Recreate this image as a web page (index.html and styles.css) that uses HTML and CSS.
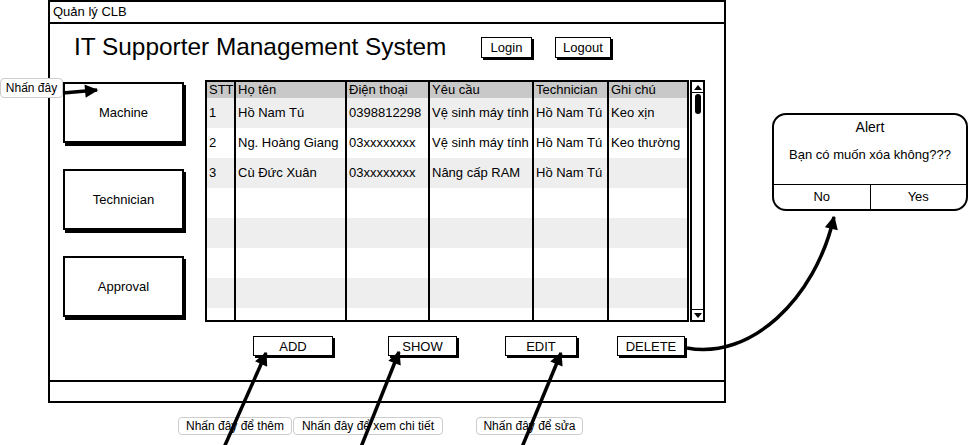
FILE: index.html
```html
<html lang="vi">
<head>
    <meta charset="UTF-8">
    <title>Quản lý CLB</title>
    <link rel="stylesheet" href="styles.css">
</head>
<body>
<div class="page">
    <div class="window">
        <div class="titlebar">Quản lý CLB</div>
        <div class="header">
            <h1>IT Supporter Management System</h1>
            <button class="btn btn-login">Login</button>
            <button class="btn btn-logout">Logout</button>
        </div>
        <div class="main">
            <div class="nav">
                <button class="nav-btn">Machine</button>
                <button class="nav-btn">Technician</button>
                <button class="nav-btn">Approval</button>
            </div>
            <div class="grid">
                <div class="row head">
                    <div class="cell">STT</div><div class="cell">Họ tên</div><div class="cell">Điện thoại</div><div class="cell">Yêu cầu</div><div class="cell">Technician</div><div class="cell">Ghi chú</div>
                </div>
                <div class="row">
                    <div class="cell">1</div><div class="cell">Hồ Nam Tú</div><div class="cell">0398812298</div><div class="cell">Vệ sinh máy tính</div><div class="cell">Hồ Nam Tú</div><div class="cell">Keo xịn</div>
                </div>
                <div class="row">
                    <div class="cell">2</div><div class="cell">Ng. Hoàng Giang</div><div class="cell">03xxxxxxxx</div><div class="cell">Vệ sinh máy tính</div><div class="cell">Hồ Nam Tú</div><div class="cell">Keo thường</div>
                </div>
                <div class="row">
                    <div class="cell">3</div><div class="cell">Cù Đức Xuân</div><div class="cell">03xxxxxxxx</div><div class="cell">Nâng cấp RAM</div><div class="cell">Hồ Nam Tú</div><div class="cell"></div>
                </div>
                <div class="row"><div class="cell"></div><div class="cell"></div><div class="cell"></div><div class="cell"></div><div class="cell"></div><div class="cell"></div></div>
                <div class="row"><div class="cell"></div><div class="cell"></div><div class="cell"></div><div class="cell"></div><div class="cell"></div><div class="cell"></div></div>
                <div class="row"><div class="cell"></div><div class="cell"></div><div class="cell"></div><div class="cell"></div><div class="cell"></div><div class="cell"></div></div>
                <div class="row"><div class="cell"></div><div class="cell"></div><div class="cell"></div><div class="cell"></div><div class="cell"></div><div class="cell"></div></div>
                <div class="row"><div class="cell"></div><div class="cell"></div><div class="cell"></div><div class="cell"></div><div class="cell"></div><div class="cell"></div></div>
            </div>
            <div class="scroll">
                <div class="scroll-up"><span class="tri-up"></span></div>
                <div class="thumb"></div>
                <div class="scroll-down"><span class="tri-down"></span></div>
            </div>
        </div>
        <div class="actions">
            <button class="btn btn-add">ADD</button>
            <button class="btn btn-show">SHOW</button>
            <button class="btn btn-edit">EDIT</button>
            <button class="btn btn-delete">DELETE</button>
        </div>
        <div class="statusbar"></div>
    </div>

    <div class="notes">
        <div class="note note-add">Nhấn đây để thêm</div>
        <div class="note note-show">Nhấn đây để xem chi tiết</div>
        <div class="note note-edit">Nhấn đây để sửa</div>
    </div>

    <div class="note note-top">Nhấn đây</div>

    <div class="alert">
        <div class="alert-title">Alert</div>
        <div class="alert-msg">Bạn có muốn xóa không???</div>
        <div class="alert-foot">
            <div class="alert-btn">No</div>
            <div class="alert-btn">Yes</div>
        </div>
    </div>

    <!-- annotation arrows -->
    <svg class="arrows" width="970" height="445" viewBox="0 0 970 445">
        <defs>
            <marker id="head" viewBox="0 0 10 10" refX="9" refY="5" markerWidth="4.2" markerHeight="3.8" orient="auto">
                <path d="M0,0 L10,5 L0,10 z" fill="#000"/>
            </marker>
        </defs>
        <g fill="none" stroke="#000" stroke-width="3.5" marker-end="url(#head)">
            <path d="M63,93 L97,90"/>
            <path d="M222,452 L266,353"/>
            <path d="M359,452 L399,352"/>
            <path d="M520,452 L561,353"/>
            <path d="M687,348 C750,360 815,300 834,217"/>
        </g>
    </svg>
</div>
</body>
</html>
```

FILE: styles.css
```css
body { margin: 0; font-family: "Liberation Sans", Arial, sans-serif; color: #000; background: #fff; }
.page { position: relative; width: 970px; height: 445px; overflow: hidden; }

.window { margin-left: 48px; width: 678px; height: 403px; border: 2px solid #000; box-sizing: border-box; display: flex; flex-direction: column; }
.titlebar { height: 20px; border-bottom: 2px solid #000; font-size: 13px; line-height: 20px; padding-left: 3px; }

.header { height: 56px; display: flex; align-items: center; padding: 0 0 10px 24px; box-sizing: border-box; }
.header h1 { margin: 0; width: 407px; flex: none; font-size: 24.4px; font-weight: normal; }

.btn { font-family: "Liberation Sans", Arial, sans-serif; font-size: 13px; color: #000; background: #fff; border: 1.5px solid #000; box-shadow: 2px 2px 0 #000; padding: 0; height: 21px; }
.btn-login { width: 51px; }
.btn-logout { width: 56px; margin-left: 23px; }

.main { height: 242px; display: flex; padding-left: 13px; }
.nav { display: flex; flex-direction: column; gap: 26px; padding-top: 2px; width: 121px; }
.nav-btn { height: 61px; width: 121px; border: 2px solid #000; box-shadow: 2px 3px 0 #000; background: #fff; font-family: "Liberation Sans", Arial, sans-serif; font-size: 13px; color: #000; padding: 0; }

.grid { margin-left: 21px; width: 484px; height: 242px; border: 2px solid #000; box-sizing: border-box; overflow: hidden; }
.row { display: grid; grid-template-columns: 29px 111px 83px 104px 75px 78px; height: 30px; flex: none; }
.row:nth-child(even) { background: #eee; }
.row.head { height: 16px; background: #c8c8c8; }
.cell { border-right: 2px solid #000; padding-left: 2px; line-height: 30px; font-size: 13px; white-space: nowrap; overflow: hidden; }
.head .cell { line-height: 16px; }
.cell:last-child { border-right: none; }

.scroll { margin-left: 1px; width: 15px; height: 242px; border: 2px solid #000; box-sizing: border-box; display: flex; flex-direction: column; }
.scroll-up { height: 10px; border-bottom: 1.5px solid #000; display: flex; justify-content: center; align-items: center; }
.scroll-down { height: 10px; border-top: 1.5px solid #000; margin-top: auto; display: flex; justify-content: center; align-items: center; }
.tri-up { width: 0; height: 0; border-left: 4px solid transparent; border-right: 4px solid transparent; border-bottom: 5px solid #000; }
.tri-down { width: 0; height: 0; border-left: 4px solid transparent; border-right: 4px solid transparent; border-top: 5px solid #000; }
.thumb { width: 6px; height: 20px; margin: 1px auto 0; background: #000; border-radius: 3px; }

.actions { height: 58px; padding: 14px 0 0 203px; display: flex; align-items: flex-start; box-sizing: border-box; }
.actions .btn { height: 20px; }
.btn-add { width: 80px; }
.btn-show { width: 69px; margin-left: 55px; }
.btn-edit { width: 72px; margin-left: 48px; }
.btn-delete { width: 68px; margin-left: 40px; }
.statusbar { flex: 1; border-top: 2px solid #000; }

.notes { display: flex; padding-left: 178px; margin-top: 14px; }
.note { height: 18px; line-height: 17px; border: 1px solid #ccc; border-radius: 4px; font-size: 12px; text-align: center; box-sizing: border-box; background: #fff; white-space: nowrap; }
.note-add { width: 114px; }
.note-show { width: 150px; margin-left: 1px; }
.note-edit { width: 107px; margin-left: 33px; }
.note-top { position: absolute; left: 0; top: 78px; width: 63px; height: 20px; line-height: 19px; }

.alert { position: absolute; left: 772px; top: 113px; width: 196px; height: 98px; border: 2px solid #000; border-radius: 14px; background: #fff; box-sizing: border-box; display: flex; flex-direction: column; overflow: hidden; }
.alert-title { font-size: 14px; text-align: center; line-height: 20px; margin-top: 2px; }
.alert-msg { font-size: 13px; text-align: center; line-height: 20px; margin-top: 8px; }
.alert-foot { margin-top: auto; height: 24px; border-top: 1.5px solid #000; display: flex; }
.alert-btn { flex: 1; text-align: center; font-size: 13px; line-height: 23px; }
.alert-btn:first-child { border-right: 1.5px solid #000; }

.arrows { position: absolute; left: 0; top: 0; pointer-events: none; }
```
